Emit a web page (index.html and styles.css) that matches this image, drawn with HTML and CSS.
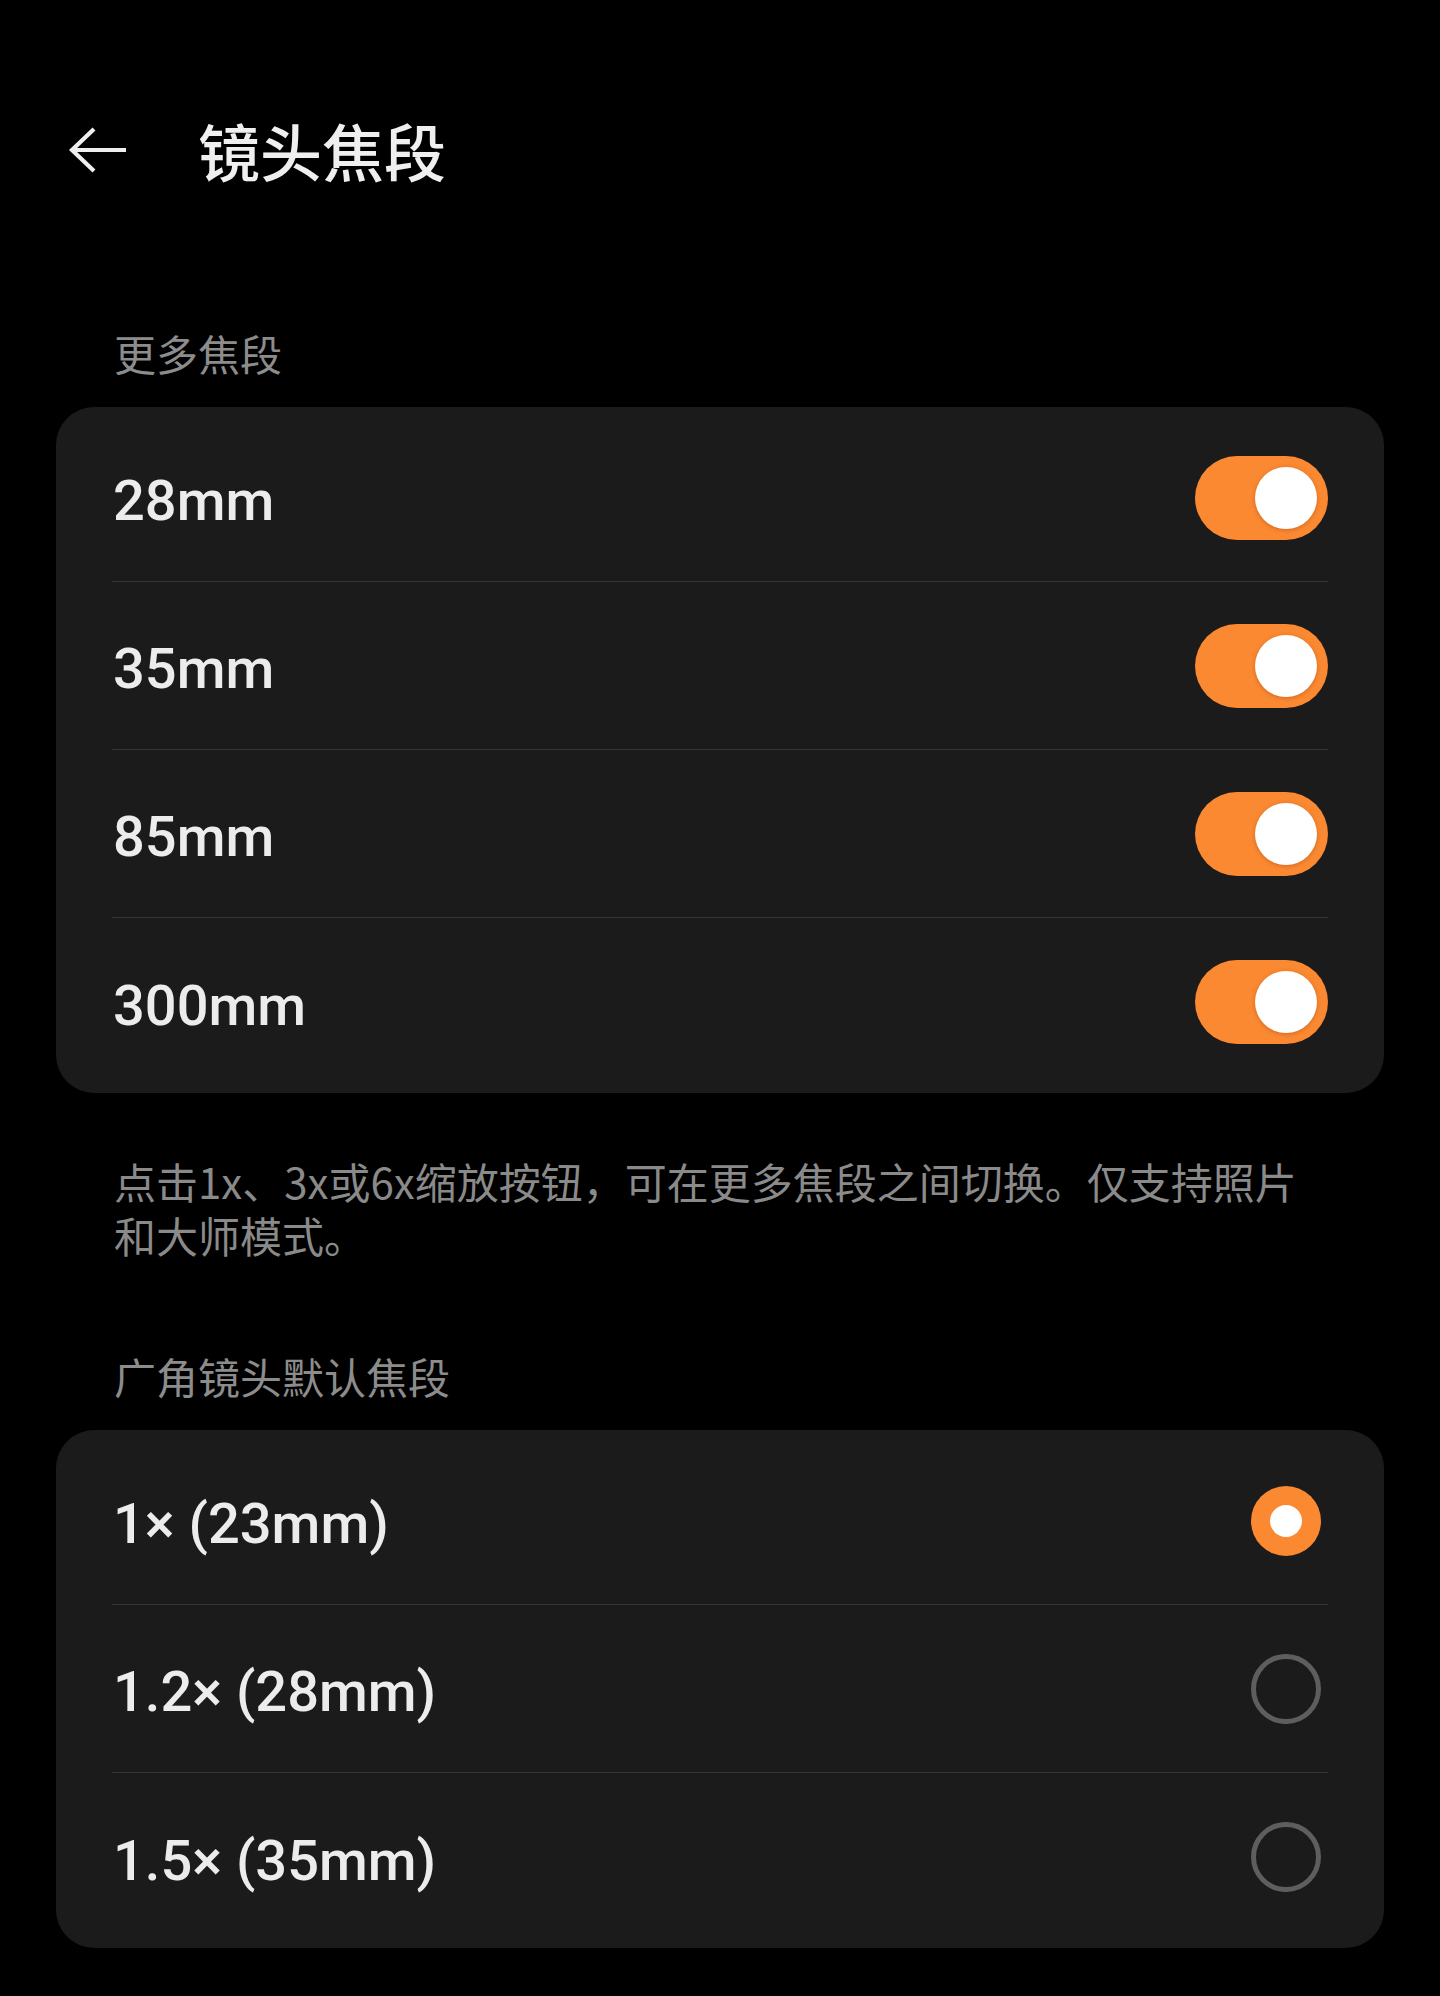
FILE: index.html
```html
<!DOCTYPE html>
<html lang="zh-CN">
<head>
<meta charset="utf-8">
<title>镜头焦段</title>
<link rel="stylesheet" href="styles.css">
</head>
<body>
<div class="page">
  <header class="header">
    <svg class="back" width="62" height="50" viewBox="0 0 62 50" aria-hidden="true">
      <path d="M59 25 H6 M27 4 L5 25 L27 46" fill="none" stroke="#efefef" stroke-width="4.2" stroke-linecap="butt" stroke-linejoin="miter"/>
    </svg>
    <h1 class="title">镜头焦段</h1>
  </header>

  <div class="section-label first">更多焦段</div>
  <div class="card">
    <div class="row"><span class="row-text">28mm</span><span class="toggle on"><span class="knob"></span></span></div>
    <div class="row"><span class="row-text">35mm</span><span class="toggle on"><span class="knob"></span></span></div>
    <div class="row"><span class="row-text">85mm</span><span class="toggle on"><span class="knob"></span></span></div>
    <div class="row"><span class="row-text">300mm</span><span class="toggle on"><span class="knob"></span></span></div>
  </div>

  <p class="note">点击1x、3x或6x缩放按钮，可在更多焦段之间切换。仅支持照片和大师模式。</p>

  <div class="section-label">广角镜头默认焦段</div>
  <div class="card">
    <div class="row"><span class="row-text">1× (23mm)</span><span class="radio checked"></span></div>
    <div class="row"><span class="row-text">1.2× (28mm)</span><span class="radio"></span></div>
    <div class="row"><span class="row-text">1.5× (35mm)</span><span class="radio"></span></div>
  </div>
</div>
</body>
</html>
```

FILE: styles.css
```css
html, body {
  margin: 0;
  padding: 0;
  background: #000;
}
body {
  font-family: "Roboto", "Noto Sans CJK SC", sans-serif;
  color: #eeeeee;
  height: 1996px;
  overflow: hidden;
}
.page {
  padding: 0 56px;
}
.header {
  display: flex;
  align-items: center;
  height: 120px;
  margin-top: 90px;
  padding-left: 11px;
}
.back {
  display: block;
  flex: none;
}
.title {
  margin: 0 0 0 69px;
  font-family: "Noto Sans CJK SC", sans-serif;
  font-size: 62px;
  font-weight: 500;
  line-height: 1;
  color: #efefef;
}
.section-label {
  font-family: "Noto Sans CJK SC", sans-serif;
  font-size: 42px;
  line-height: 56px;
  color: #8c8c8c;
  padding-left: 58px;
  margin-top: 86px;
  margin-bottom: 26px;
}
.section-label.first {
  margin-top: 115px;
}
.card {
  background: #1b1b1b;
  border-radius: 38px;
  padding: 7px 56px;
}
.row {
  display: flex;
  align-items: center;
  justify-content: space-between;
  height: 167px;
  border-bottom: 1px solid #363636;
}
.row:last-child {
  border-bottom: none;
  height: 168px;
}
.row-text {
  font-family: "Roboto", "Noto Sans CJK SC", sans-serif;
  font-size: 56px;
  font-weight: 500;
  color: #ececec;
  padding-left: 1px;
  padding-top: 7px;
}
.toggle {
  position: relative;
  width: 133px;
  height: 84px;
  border-radius: 42px;
  background: #fb8932;
  flex: none;
}
.knob {
  position: absolute;
  right: 11px;
  top: 11px;
  width: 62px;
  height: 62px;
  border-radius: 50%;
  background: #ffffff;
  box-shadow: 0 1px 4px rgba(120, 50, 0, 0.35);
}
.radio {
  box-sizing: border-box;
  width: 70px;
  height: 70px;
  border-radius: 50%;
  border: 5px solid #5e5e5e;
  margin-right: 7px;
  flex: none;
  position: relative;
}
.radio.checked {
  border: none;
  background: #fb8932;
}
.radio.checked::after {
  content: "";
  position: absolute;
  left: 19px;
  top: 19px;
  width: 32px;
  height: 32px;
  border-radius: 50%;
  background: #ffffff;
}
.note {
  margin: 61px 0 0;
  padding: 0 58px;
  font-family: "Noto Sans CJK SC", sans-serif;
  font-size: 42px;
  line-height: 54px;
  color: #8a8a8a;
}
```
